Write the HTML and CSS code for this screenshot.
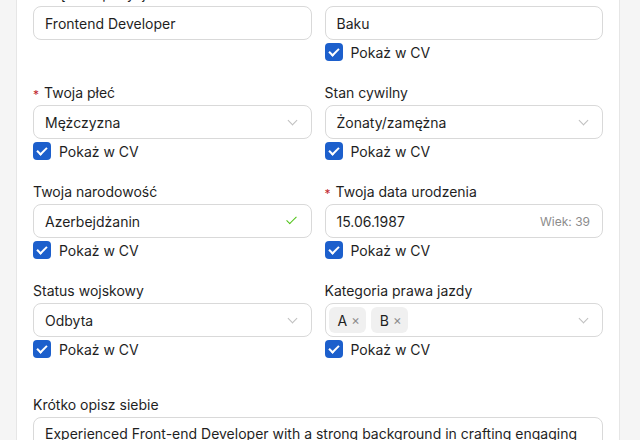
FILE: index.html
```html
<!DOCTYPE html>
<html lang="pl">
<head>
    <meta charset="UTF-8">
    <title>Dane osobowe</title>
    <link rel="stylesheet" href="styles.css">
</head>
<body>

    <div class="card">

        <!-- Dane podstawowe -->

        <div class="form-grid">
            <div class="field">
                <label class="label">Pożądana pozycja</label>
                <div class="input"><span>Frontend Developer</span></div>
            </div>

            <div class="field">
                <label class="label">Miasto</label>
                <div class="input"><span>Baku</span></div>
                <div class="show-cv"><span class="box"></span>Pokaż w CV</div>
            </div>

            <div class="field">
                <label class="label"><span class="req">*</span>Twoja płeć</label>
                <div class="input select"><span>Mężczyzna</span><span class="chevron"></span></div>
                <div class="show-cv"><span class="box"></span>Pokaż w CV</div>
            </div>

            <div class="field">
                <label class="label">Stan cywilny</label>
                <div class="input select"><span>Żonaty/zamężna</span><span class="chevron"></span></div>
                <div class="show-cv"><span class="box"></span>Pokaż w CV</div>
            </div>

            <div class="field">
                <label class="label">Twoja narodowość</label>
                <div class="input select"><span>Azerbejdżanin</span><span class="ok"></span></div>
                <div class="show-cv"><span class="box"></span>Pokaż w CV</div>
            </div>

            <div class="field">
                <label class="label"><span class="req">*</span>Twoja data urodzenia</label>
                <div class="input"><span>15.06.1987</span><span class="age">Wiek: 39</span></div>
                <div class="show-cv"><span class="box"></span>Pokaż w CV</div>
            </div>

            <div class="field">
                <label class="label">Status wojskowy</label>
                <div class="input select"><span>Odbyta</span><span class="chevron"></span></div>
                <div class="show-cv"><span class="box"></span>Pokaż w CV</div>
            </div>

            <div class="field">
                <label class="label">Kategoria prawa jazdy</label>
                <div class="input select multi">
                    <span class="tags">
                        <span class="tag">A<span class="x">×</span></span>
                        <span class="tag">B<span class="x">×</span></span>
                    </span>
                    <span class="chevron"></span>
                </div>
                <div class="show-cv"><span class="box"></span>Pokaż w CV</div>
            </div>
        </div>

        <!-- O mnie -->

        <div class="field about">
            <label class="label">Krótko opisz siebie</label>
            <div class="textarea">Experienced Front-end Developer with a strong background in crafting engaging and responsive web interfaces using modern frameworks.</div>
        </div>

    </div>

</body>
</html>
```

FILE: styles.css
```css
*{
    margin: 0;
    padding: 0;
    box-sizing: border-box;
}

body{
    background: #f5f5f5;
    font-family: Inter, "Noto Sans", sans-serif;
    font-size: 14px;
    color: #1f1f1f;
    width: 636px;
    height: 440px;
    overflow: hidden;
}

.card{
    margin: -16px 0 0 16px;
    width: 604px;
    background: #fff;
    border: 1px solid #e6e6e6;
    border-top: none;
    padding: 0 16px 40px 16px;
    min-height: 500px;
}

.form-grid{
    display: grid;
    grid-template-columns: 1fr 1fr;
    column-gap: 13px;
    row-gap: 21px;
    align-items: start;
}

.field{
    display: flex;
    flex-direction: column;
}

.label{
    height: 22px;
    line-height: 20px;
    display: flex;
    align-items: flex-start;
}

.req{
    color: #c0262d;
    font-size: 12px;
    margin-right: 5px;
    margin-top: 2px;
}

.input{
    height: 34px;
    border: 1px solid #d9d9d9;
    border-radius: 8px;
    padding: 0 12px 0 11px;
    display: flex;
    align-items: center;
    justify-content: space-between;
}

.chevron{
    width: 7px;
    height: 7px;
    border-right: 1px solid #bfbfbf;
    border-bottom: 1px solid #bfbfbf;
    transform: rotate(45deg);
    margin: -4px 3px 0 0;
}

.ok{
    width: 5px;
    height: 10px;
    border-right: 1.5px solid #52c41a;
    border-bottom: 1.5px solid #52c41a;
    transform: rotate(45deg);
    margin: -4px 5px 0 0;
}

.age{
    font-size: 12px;
    color: #8c8c8c;
}

.multi{
    padding-left: 3px;
}

.tags{
    display: flex;
    gap: 5px;
}

.tag{
    height: 26px;
    background: #f0f0f0;
    border-radius: 6px;
    padding: 0 6px 0 9px;
    display: flex;
    align-items: center;
    gap: 4px;
}

.x{
    color: #8c8c8c;
    font-size: 13px;
}

.show-cv{
    margin-top: 2px;
    height: 20px;
    display: flex;
    align-items: center;
    gap: 8px;
}

.box{
    width: 18px;
    height: 18px;
    border-radius: 4px;
    background: #1c5fcc;
    position: relative;
}

.box::after{
    content: "";
    position: absolute;
    left: 6px;
    top: 3px;
    width: 4px;
    height: 8px;
    border-right: 2px solid #fff;
    border-bottom: 2px solid #fff;
    transform: rotate(45deg);
}

.about{
    margin-top: 36px;
}

.textarea{
    border: 1px solid #d9d9d9;
    border-radius: 8px;
    padding: 5px 12px 5px 11px;
    line-height: 22px;
    height: 80px;
}
```
